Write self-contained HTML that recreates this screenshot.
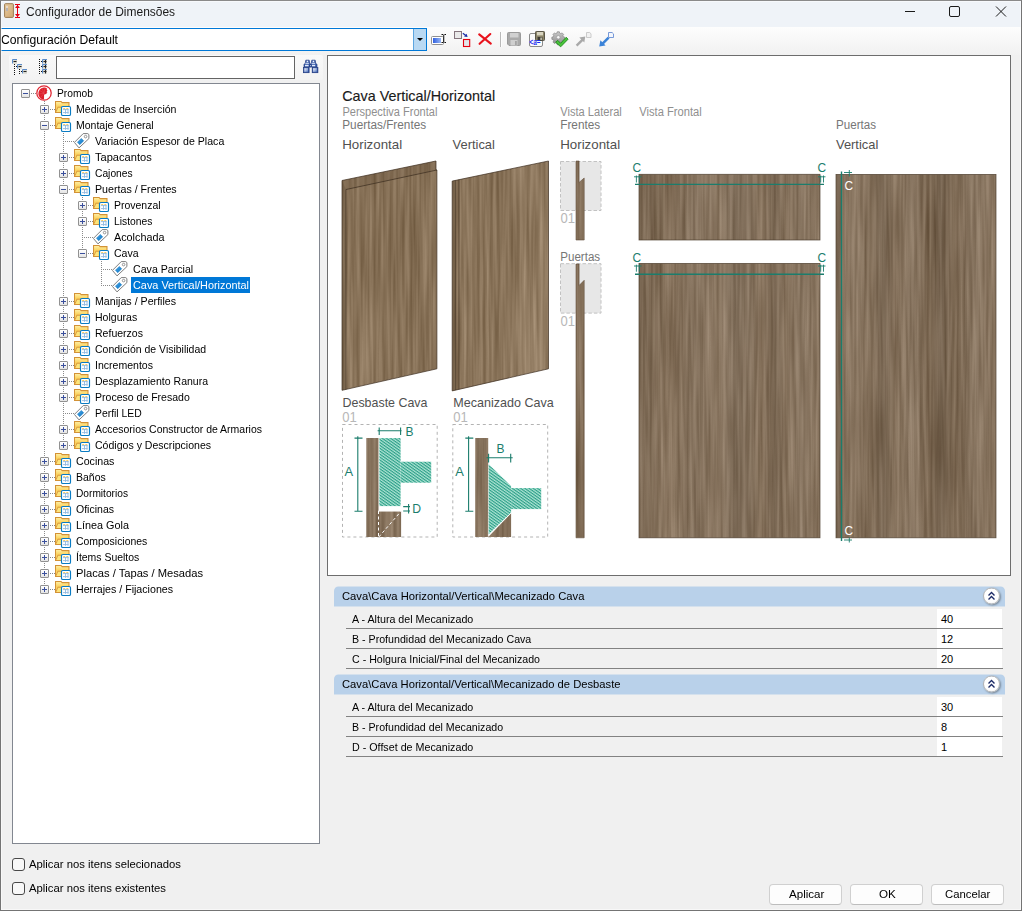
<!DOCTYPE html><html><head><meta charset="utf-8"><title>Configurador de Dimensões</title><style>
html,body{margin:0;padding:0;}
body{width:1022px;height:911px;overflow:hidden;background:#f0f0f0;font-family:"Liberation Sans",sans-serif;font-size:11px;color:#000;position:relative;}
.abs{position:absolute;}
.fx{display:inline-block;font-weight:normal;transform-origin:0 50%;white-space:nowrap;}
#win{z-index:10;pointer-events:none;position:absolute;left:0;top:0;width:1020px;height:909px;border:1px solid #747474;border-top-color:#8a8a8a;box-shadow:inset 0 0 0 1px rgba(255,255,255,.5);}
#title{position:absolute;left:1px;top:1px;width:1020px;height:26px;background:#eff3f8;}
#title .cap{position:absolute;left:25px;top:4px;font-size:12px;line-height:15px;color:#1b1b1b;white-space:nowrap;}
#tb{position:absolute;left:1px;top:27px;width:1020px;height:28px;background:linear-gradient(#fdfdfd,#f1f1f1);}
#combo{position:absolute;left:-1px;top:28px;width:426px;height:21px;border:1px solid #0078d7;background:#fff;}
#combo .txt{position:absolute;left:1.400px;top:4px;font-size:12px;line-height:15px;white-space:nowrap;}
#combo .btn{position:absolute;right:0;top:0;width:12px;height:21px;background:#b9d9f3;border-left:1px solid #5ea6e0;}
#combo .btn:after{content:"";position:absolute;left:3px;top:9px;border:3px solid transparent;border-top:3px solid #000;border-bottom:none;}
#tstrip{position:absolute;left:9px;top:55px;width:314px;height:25px;background:linear-gradient(#f9f9f9,#f3f3f3);border-radius:2px;}
#search{position:absolute;left:56px;top:56px;width:237px;height:21px;border:1px solid #646464;background:#fff;}
#tree{position:absolute;left:12px;top:83px;width:306px;height:759px;border:1px solid #828790;background:#fff;overflow:hidden;}
.row{position:absolute;height:16px;line-height:16px;white-space:nowrap;font-size:11px;}
.row.sel{color:#fff;}
.exp{position:absolute;width:7px;height:7px;border:1px solid #919191;background:linear-gradient(#fff,#e4e4e4);border-radius:1px;}
.exp i{position:absolute;left:1px;top:3px;width:5px;height:1px;background:#3a4f9c;}
.exp b{position:absolute;left:3px;top:1px;width:1px;height:5px;background:#3a4f9c;}
.vd{position:absolute;width:1px;background-image:linear-gradient(#8a8a8a 50%,transparent 50%);background-size:1px 2px;}
.hd{position:absolute;height:1px;background-image:linear-gradient(90deg,#8a8a8a 50%,transparent 50%);background-size:2px 1px;}
.cb{position:absolute;left:12px;width:11px;height:11px;border:1px solid #484848;border-radius:3px;background:#f8f8f8;}
.cbl{position:absolute;left:29px;font-size:11px;line-height:14px;white-space:nowrap;}
.btn3{position:absolute;top:884px;width:71px;height:19px;border:1px solid #d0d0d0;border-bottom-color:#bdbdbd;border-radius:4px;background:#fdfdfd;text-align:center;line-height:19px;font-size:11px;}
#imgp{position:absolute;left:327px;top:55px;width:682px;height:519px;border:1px solid #6d6d6d;background:#fff;overflow:hidden;}
.hdr{position:absolute;left:334px;width:671px;height:20px;background:#b9d1ea;border-radius:4.500px 4.500px 0 0;transform:translateY(0.500px);}
.hdr span{position:absolute;left:8px;top:1.700px;line-height:14px;font-size:11px;white-space:nowrap;}
.chev{position:absolute;left:649px;top:0.500px;width:15px;height:15px;border:1px solid #b5b5b5;border-radius:50%;background:radial-gradient(circle at 50% 40%,#fff 60%,#e8e8e8);box-shadow:1px 1px 2px rgba(0,0,0,.35);}
.prow{position:absolute;left:346px;width:657px;height:19px;border-bottom:1px solid #828282;}
.prow span{position:absolute;left:6px;top:3px;line-height:14px;white-space:nowrap;}
.prow em{font-style:normal;position:absolute;left:591px;top:0;width:65px;height:19px;background:#fff;}
.prow em u{text-decoration:none;position:absolute;left:4px;top:3px;line-height:14px;}
</style></head><body>
<div id="win"></div>
<div id="title"><div class="cap"><b class="fx" style="transform:scaleX(0.9978)">Configurador de Dimensões</b></div>
<svg class="abs" style="left:880px;top:0" width="140" height="26" viewBox="0 0 140 26" fill="none" stroke="#1a1a1a" stroke-width="1"><path d="M24 10.5h10"/><rect x="68.5" y="5.5" width="10" height="10" rx="1.5"/><path d="M115 5.5l10 10M125 5.5l-10 10"/></svg>
</div>
<div id="tb"></div>
<div id="combo"><div class="txt"><b class="fx" style="transform:scaleX(1.0138)">Configuración Default</b></div><div class="btn"></div></div>
<svg class="abs" style="left:0;top:0" width="30" height="26" viewBox="0 0 30 26">
<defs><linearGradient id="gdoor" x1="0" y1="0" x2="1" y2="1"><stop offset="0" stop-color="#e9cda2"/><stop offset="1" stop-color="#cfa671"/></linearGradient></defs>
<rect x="4.6" y="3.7" width="8.8" height="13.7" rx="0.8" fill="url(#gdoor)" stroke="#9c7b52" stroke-width="1"/>
<rect x="6.4" y="6" width="1.2" height="5" fill="#e8e8ee"/><rect x="6.4" y="8" width="1.2" height="3" fill="#9a9aa6"/>
<path d="M15 4.5h5M15 17.5h5M17.5 5v12" stroke="#e60012" stroke-width="1" fill="none"/>
<path d="M17.5 5l2.5 3h-5zM17.5 17l2.5-3h-5z" fill="#e60012"/>
</svg>
<svg class="abs" style="left:424px;top:26px" width="200" height="28" viewBox="0 0 200 28">
<defs>
<linearGradient id="gblue" x1="0" y1="0" x2="1" y2="0"><stop offset="0" stop-color="#2f5fe0"/><stop offset="1" stop-color="#9ab8f4"/></linearGradient>
<linearGradient id="ggear" x1="0" y1="0" x2="0" y2="1"><stop offset="0" stop-color="#c9c9c9"/><stop offset="1" stop-color="#8d8d8d"/></linearGradient>
</defs>
<!-- rename -->
<rect x="7.5" y="10.5" width="12" height="8" rx="1" fill="#fff" stroke="#8f8f8f"/>
<rect x="9" y="12" width="8" height="5" fill="url(#gblue)"/>
<path d="M17.5 8.5h1.5M20.5 8.5h1.5M17.5 16.5h1.5M20.5 16.5h1.5M19.75 8.5v8" stroke="#111" stroke-width="1" fill="none"/>
<!-- move -->
<rect x="30.5" y="5.5" width="7" height="7" fill="#e9e9e9" stroke="#85757d"/>
<path d="M38.8 7.200l3.400 2.600" stroke="#1c2fa8" stroke-width="1.200" fill="none"/><path d="M43.600 10.900l-3.600-.300 2.600-2.800z" fill="#1c2fa8"/>
<rect x="39.5" y="13.5" width="6.2" height="7" fill="#e3e6ea" stroke="#e3000f" stroke-width="1.1"/>
<!-- delete X -->
<path d="M55.200 8.400l11.600 9.200M66.300 8L55.600 17.800" stroke="#e8121c" stroke-width="2.1" stroke-linecap="round" fill="none"/>
<!-- separator -->
<path d="M76.5 6v15" stroke="#b9b9b9" stroke-width="1"/><path d="M77.5 6v15" stroke="#fdfdfd" stroke-width="1"/>
<!-- save disabled -->
<path d="M83.5 7.5a1 1 0 0 1 1-1h11a1 1 0 0 1 1 1v11a1 1 0 0 1-1 1h-10.5l-1.5-1.5z" fill="#a9a9a9" stroke="#9a9a9a"/>
<rect x="86" y="7" width="8.5" height="4.5" fill="#d0d0d0"/><rect x="86.5" y="14" width="7" height="5.5" fill="#cfcfcf"/><rect x="91" y="15" width="1.8" height="4" fill="#a4a4a4"/>
<!-- save-as -->
<rect x="105.5" y="7.5" width="13" height="13" rx="1.5" fill="#fafafa" stroke="#8a8a8a"/>
<rect x="111.5" y="5.5" width="9" height="9" rx="0.8" fill="#8b8468" stroke="#5a5648"/>
<rect x="113" y="6" width="6" height="3.4" fill="#d8d4c0"/><rect x="113.6" y="11" width="4.8" height="3.5" fill="#3c3a34"/><rect x="116.4" y="11.5" width="1.4" height="2.5" fill="#d8d4c0"/>
<text x="105.6" y="19.3" font-family="Liberation Sans,sans-serif" font-size="9" font-weight="bold" fill="#1a2df0" textLength="11" lengthAdjust="spacingAndGlyphs">&lt;a=</text>
<!-- gear + check -->
<g transform="translate(134.300,11.300) scale(0.880)">
<path d="M-1.2-6.3h2.4l.4 1.6 1.3.55 1.45-.85 1.7 1.7-.85 1.45.55 1.3 1.6.4v2.4l-1.6.4-.55 1.3.85 1.45-1.7 1.7-1.45-.85-1.3.55-.4 1.6h-2.4l-.4-1.6-1.3-.55-1.45.85-1.7-1.7.85-1.45-.55-1.3-1.6-.4v-2.4l1.6-.4.55-1.3-.85-1.45 1.7-1.7 1.45.85 1.3-.55z" fill="url(#ggear)" stroke="#7d7d7d" stroke-width="0.7"/>
<circle r="2" fill="#f6f6f6" stroke="#8a8a8a" stroke-width="0.6"/></g>
<path d="M131.6 16.2l2.2-1.8 2.8 2.9 5.6-6 1.9 1.9-7.4 7.6z" fill="#49c43a" stroke="#1f8a1c" stroke-width="0.9" stroke-linejoin="round"/>
<!-- arrow up-right disabled -->
<path d="M152.6 19.6l6.3-6.3" stroke="#a9a9a9" stroke-width="2.4"/><path d="M161.3 10.6l-1 6-5-5z" fill="#a9a9a9"/>
<path d="M162.5 6.5h3.2l1.3 1.3v3.7h-4.5z" fill="#f2f2f2" stroke="#c6c6c6" stroke-width="0.9"/>
<!-- arrow down-left blue -->
<path d="M184.6 11.6l-6 6" stroke="#3b83d8" stroke-width="2.6"/><path d="M175.2 20.6l1.2-6.4 5.2 5.2z" fill="#3b83d8"/>
<path d="M184.5 6.5h3.6l1.4 1.4v3.6h-5z" fill="#f4f7fd" stroke="#6a8fd4" stroke-width="0.9"/>
</svg>

<div id="tstrip"></div><div id="search"></div>
<svg class="abs" style="left:9px;top:55px" width="316" height="25" viewBox="0 0 316 25">
<!-- collapse-all icon (origin 9,55) -->
<g fill="none">
<path d="M5.500 9v12M10.500 14v6" stroke="#111" stroke-dasharray="1 1"/>
<path d="M7 11.500h1M12 16.500h1" stroke="#111"/>
<g stroke="#5b8bc8" stroke-width="1"><path d="M3.500 8.500v-4h4.500M8.500 13.500v-4h4.500M13.500 18.500v-4h4.500"/></g>
<g fill="#d6d6ce" stroke="none"><rect x="4" y="5" width="4" height="3.700"/><rect x="9" y="10" width="4" height="3.700"/><rect x="14" y="15" width="4" height="3.700"/></g>
<path d="M4.500 6.500h3M9.500 11.500h3M14.500 16.500h3" stroke="#222" stroke-width="1"/>
</g>
<!-- expand-all icon -->
<g fill="none">
<path d="M30.500 4v16" stroke="#111" stroke-dasharray="1 1"/>
<path d="M32 6.500h1M32 11.500h1M32 16.500h1" stroke="#111"/>
<g stroke="#5b8bc8" stroke-width="1"><path d="M33.500 8.500v-4h4.500M33.500 13.500v-4h4.500M33.500 18.500v-4h4.500"/></g>
<g fill="#d6d6ce" stroke="none"><rect x="34" y="5" width="4" height="3.700"/><rect x="34" y="10" width="4" height="3.700"/><rect x="34" y="15" width="4" height="3.700"/></g>
<path d="M34.500 6.500h3M36.500 5v3.500M34.500 11.500h3M36.500 10v3.500M34.500 16.500h3M36.500 15v3.500" stroke="#222" stroke-width="1"/>
</g>
<!-- binoculars -->
<g transform="translate(294,4)">
<defs><linearGradient id="gbin" x1="0" y1="0" x2="1" y2="1"><stop offset="0" stop-color="#ffffff"/><stop offset="1" stop-color="#4f74c0"/></linearGradient></defs>
<path d="M2.800 1.200h3.400l.6 3.600 1 .4v2.800h-6.800v-2.800l1.200-.4z" fill="#3a5ca8" stroke="#1f3a82" stroke-width="0.700"/>
<path d="M8.800 1.200h3.400l.6 3.600 1.200.4v2.800h-6.800v-2.800l1-.4z" fill="#3a5ca8" stroke="#1f3a82" stroke-width="0.700"/>
<rect x="3.700" y="1.700" width="1.500" height="1.500" fill="#eef3ff"/><rect x="9.700" y="1.700" width="1.500" height="1.500" fill="#eef3ff"/>
<rect x="2.400" y="3.800" width="3.500" height="1" fill="#dfe8fb"/><rect x="8.600" y="3.800" width="3.500" height="1" fill="#dfe8fb"/>
<rect x="2" y="5.800" width="3.600" height="1.500" fill="#e6edfc"/><rect x="8.600" y="5.800" width="3.600" height="1.500" fill="#e6edfc"/>
<rect x="6.300" y="5.500" width="2.400" height="2.400" fill="#1f3a82"/><rect x="7" y="6.200" width="1" height="1" fill="#b9c8ea"/>
<rect x="0.400" y="8.400" width="5.700" height="5.300" fill="#2f4f9e" stroke="#1f3a82" stroke-width="0.700"/>
<rect x="9.200" y="8.400" width="5.700" height="5.300" fill="#2f4f9e" stroke="#1f3a82" stroke-width="0.700"/>
<rect x="1.300" y="9.200" width="3.800" height="3.700" fill="url(#gbin)"/><rect x="10.100" y="9.200" width="3.800" height="3.700" fill="url(#gbin)"/>
</g>
</svg>

<div id="tree">
<svg width="0" height="0" style="position:absolute"><defs><linearGradient id="gfold" x1="0" y1="0" x2="0" y2="1"><stop offset="0" stop-color="#fff0a8"/><stop offset="0.45" stop-color="#fbd35e"/><stop offset="1" stop-color="#fde680"/></linearGradient>
<linearGradient id="gtag" x1="0" y1="0" x2="1" y2="1"><stop offset="0" stop-color="#49a6e6"/><stop offset="1" stop-color="#0a74c4"/></linearGradient>
<g id="i-folder">
<path d="M0.5 0.500h5.600l1 1.100h6.900v9.800h-13.500z" fill="url(#gfold)" stroke="#d39236" stroke-width="1.050"/>
<path d="M1.200 10.600l1.600-4.400h11" fill="none" stroke="#da9a40" stroke-width="1"/>
<path d="M3.200 6.900h10.300v3.900h-11.500z" fill="#fde47a" opacity=".9"/>
<rect x="6.5" y="5.5" width="9" height="9" rx="1.3" fill="#fff" stroke="#0a7bc2" stroke-width="1.15"/>
<path d="M8.2 7.6h2M11.3 7.6h2" stroke="#f7c23c" stroke-width="0.9"/>
<path d="M8 8.6h5.6M8 11.6h5.6M10.5 8v4.8M13 8v4.8" stroke="#8eb8e0" stroke-width="0.9" fill="none"/>
</g>
<g id="i-tag">
<path d="M0.4 9.4L9.2 0.6h4.6l1.1 1v4L5 14.9z" fill="#fff" stroke="#7d7d7d" stroke-width="1" stroke-linejoin="round"/>
<circle cx="11.6" cy="3.6" r="1.3" fill="#fff" stroke="#8a8a8a" stroke-width="0.9"/>
<path d="M3.400 9.300l3.900-3.900 2.400 2.400-3.900 3.900z" fill="url(#gtag)" stroke="#0b73be" stroke-width="0.5"/>
</g>
<g id="i-promob">
<circle cx="8" cy="8" r="7.2" fill="#fff" stroke="#e02a36" stroke-width="1.3"/>
<path d="M8 14.6A5.7 5.7 0 0 1 2.4 8A5.7 5.7 0 0 1 8 2.6c1.2 0 2.4.4 3.2 1.1l-.6.9.9.8-.9.9.8 1-1 .6.2 1.1-1.6.3-.9.5z" fill="#dc1f2b"/>
<path d="M8 8.4L3.2 5M8 8.4L2.6 9M8 8.4L4.6 12.6M8 8.4L6 3M8 8.4L9 3" stroke="#ee6a72" stroke-width="0.35"/>
</g>
</defs></svg>
<div class="vd" style="left:31px;top:17px;height:489px"></div>
<div class="vd" style="left:50px;top:49px;height:313px"></div>
<div class="vd" style="left:69px;top:113px;height:57px"></div>
<div class="vd" style="left:88px;top:177px;height:25px"></div>
<div class="hd" style="left:18px;top:9px;width:5px"></div>
<div class="exp" style="left:8px;top:5px"><i></i></div>
<svg class="abs" style="left:23px;top:1px" width="17" height="16"><use href="#i-promob"/></svg>
<div class="row" style="left:44.2px;top:1px"><b class="fx" style="transform:scaleX(0.9317)">Promob</b></div>
<div class="hd" style="left:37px;top:25px;width:5px"></div>
<div class="exp" style="left:27px;top:21px"><i></i><b></b></div>
<svg class="abs" style="left:42px;top:17px" width="17" height="16"><use href="#i-folder"/></svg>
<div class="row" style="left:63.2px;top:17px"><b class="fx" style="transform:scaleX(0.9611)">Medidas de Inserción</b></div>
<div class="hd" style="left:37px;top:41px;width:5px"></div>
<div class="exp" style="left:27px;top:37px"><i></i></div>
<svg class="abs" style="left:42px;top:33px" width="17" height="16"><use href="#i-folder"/></svg>
<div class="row" style="left:63.2px;top:33px"><b class="fx" style="transform:scaleX(0.9554)">Montaje General</b></div>
<div class="hd" style="left:52px;top:57px;width:9px"></div>
<svg class="abs" style="left:61px;top:49px" width="17" height="16"><use href="#i-tag"/></svg>
<div class="row" style="left:82.2px;top:49px"><b class="fx" style="transform:scaleX(0.9626)">Variación Espesor de Placa</b></div>
<div class="hd" style="left:56px;top:73px;width:5px"></div>
<div class="exp" style="left:46px;top:69px"><i></i><b></b></div>
<svg class="abs" style="left:61px;top:65px" width="17" height="16"><use href="#i-folder"/></svg>
<div class="row" style="left:82.2px;top:65px"><b class="fx" style="transform:scaleX(1.0077)">Tapacantos</b></div>
<div class="hd" style="left:56px;top:89px;width:5px"></div>
<div class="exp" style="left:46px;top:85px"><i></i><b></b></div>
<svg class="abs" style="left:61px;top:81px" width="17" height="16"><use href="#i-folder"/></svg>
<div class="row" style="left:82.2px;top:81px"><b class="fx" style="transform:scaleX(0.9316)">Cajones</b></div>
<div class="hd" style="left:56px;top:105px;width:5px"></div>
<div class="exp" style="left:46px;top:101px"><i></i></div>
<svg class="abs" style="left:61px;top:97px" width="17" height="16"><use href="#i-folder"/></svg>
<div class="row" style="left:82.2px;top:97px"><b class="fx" style="transform:scaleX(0.9683)">Puertas / Frentes</b></div>
<div class="hd" style="left:75px;top:121px;width:5px"></div>
<div class="exp" style="left:65px;top:117px"><i></i><b></b></div>
<svg class="abs" style="left:80px;top:113px" width="17" height="16"><use href="#i-folder"/></svg>
<div class="row" style="left:101.2px;top:113px"><b class="fx" style="transform:scaleX(0.9525)">Provenzal</b></div>
<div class="hd" style="left:75px;top:137px;width:5px"></div>
<div class="exp" style="left:65px;top:133px"><i></i><b></b></div>
<svg class="abs" style="left:80px;top:129px" width="17" height="16"><use href="#i-folder"/></svg>
<div class="row" style="left:101.2px;top:129px"><b class="fx" style="transform:scaleX(0.9369)">Listones</b></div>
<div class="hd" style="left:71px;top:153px;width:9px"></div>
<svg class="abs" style="left:80px;top:145px" width="17" height="16"><use href="#i-tag"/></svg>
<div class="row" style="left:101.2px;top:145px"><b class="fx" style="transform:scaleX(0.9810)">Acolchada</b></div>
<div class="hd" style="left:75px;top:169px;width:5px"></div>
<div class="exp" style="left:65px;top:165px"><i></i></div>
<svg class="abs" style="left:80px;top:161px" width="17" height="16"><use href="#i-folder"/></svg>
<div class="row" style="left:101.2px;top:161px"><b class="fx" style="transform:scaleX(0.9577)">Cava</b></div>
<div class="hd" style="left:90px;top:185px;width:9px"></div>
<svg class="abs" style="left:99px;top:177px" width="17" height="16"><use href="#i-tag"/></svg>
<div class="row" style="left:120.19999999999999px;top:177px"><b class="fx" style="transform:scaleX(0.9654)">Cava Parcial</b></div>
<div class="hd" style="left:90px;top:201px;width:9px"></div>
<svg class="abs" style="left:99px;top:193px" width="17" height="16"><use href="#i-tag"/></svg>
<div class="abs" style="left:118px;top:193px;width:119px;height:16px;background:#0078d7"></div>
<div class="row sel" style="left:120.19999999999999px;top:193px"><b class="fx" style="transform:scaleX(0.9882)">Cava Vertical/Horizontal</b></div>
<div class="hd" style="left:56px;top:217px;width:5px"></div>
<div class="exp" style="left:46px;top:213px"><i></i><b></b></div>
<svg class="abs" style="left:61px;top:209px" width="17" height="16"><use href="#i-folder"/></svg>
<div class="row" style="left:82.2px;top:209px"><b class="fx" style="transform:scaleX(0.9682)">Manijas / Perfiles</b></div>
<div class="hd" style="left:56px;top:233px;width:5px"></div>
<div class="exp" style="left:46px;top:229px"><i></i><b></b></div>
<svg class="abs" style="left:61px;top:225px" width="17" height="16"><use href="#i-folder"/></svg>
<div class="row" style="left:82.2px;top:225px"><b class="fx" style="transform:scaleX(0.9584)">Holguras</b></div>
<div class="hd" style="left:56px;top:249px;width:5px"></div>
<div class="exp" style="left:46px;top:245px"><i></i><b></b></div>
<svg class="abs" style="left:61px;top:241px" width="17" height="16"><use href="#i-folder"/></svg>
<div class="row" style="left:82.2px;top:241px"><b class="fx" style="transform:scaleX(0.9573)">Refuerzos</b></div>
<div class="hd" style="left:56px;top:265px;width:5px"></div>
<div class="exp" style="left:46px;top:261px"><i></i><b></b></div>
<svg class="abs" style="left:61px;top:257px" width="17" height="16"><use href="#i-folder"/></svg>
<div class="row" style="left:82.2px;top:257px"><b class="fx" style="transform:scaleX(0.9528)">Condición de Visibilidad</b></div>
<div class="hd" style="left:56px;top:281px;width:5px"></div>
<div class="exp" style="left:46px;top:277px"><i></i><b></b></div>
<svg class="abs" style="left:61px;top:273px" width="17" height="16"><use href="#i-folder"/></svg>
<div class="row" style="left:82.2px;top:273px"><b class="fx" style="transform:scaleX(0.9582)">Incrementos</b></div>
<div class="hd" style="left:56px;top:297px;width:5px"></div>
<div class="exp" style="left:46px;top:293px"><i></i><b></b></div>
<svg class="abs" style="left:61px;top:289px" width="17" height="16"><use href="#i-folder"/></svg>
<div class="row" style="left:82.2px;top:289px"><b class="fx" style="transform:scaleX(0.9583)">Desplazamiento Ranura</b></div>
<div class="hd" style="left:56px;top:313px;width:5px"></div>
<div class="exp" style="left:46px;top:309px"><i></i><b></b></div>
<svg class="abs" style="left:61px;top:305px" width="17" height="16"><use href="#i-folder"/></svg>
<div class="row" style="left:82.2px;top:305px"><b class="fx" style="transform:scaleX(0.9570)">Proceso de Fresado</b></div>
<div class="hd" style="left:52px;top:329px;width:9px"></div>
<svg class="abs" style="left:61px;top:321px" width="17" height="16"><use href="#i-tag"/></svg>
<div class="row" style="left:82.2px;top:321px"><b class="fx" style="transform:scaleX(0.9428)">Perfil LED</b></div>
<div class="hd" style="left:56px;top:345px;width:5px"></div>
<div class="exp" style="left:46px;top:341px"><i></i><b></b></div>
<svg class="abs" style="left:61px;top:337px" width="17" height="16"><use href="#i-folder"/></svg>
<div class="row" style="left:82.2px;top:337px"><b class="fx" style="transform:scaleX(0.9518)">Accesorios Constructor de Armarios</b></div>
<div class="hd" style="left:56px;top:361px;width:5px"></div>
<div class="exp" style="left:46px;top:357px"><i></i><b></b></div>
<svg class="abs" style="left:61px;top:353px" width="17" height="16"><use href="#i-folder"/></svg>
<div class="row" style="left:82.2px;top:353px"><b class="fx" style="transform:scaleX(0.9590)">Códigos y Descripciones</b></div>
<div class="hd" style="left:37px;top:377px;width:5px"></div>
<div class="exp" style="left:27px;top:373px"><i></i><b></b></div>
<svg class="abs" style="left:42px;top:369px" width="17" height="16"><use href="#i-folder"/></svg>
<div class="row" style="left:63.2px;top:369px"><b class="fx" style="transform:scaleX(0.9660)">Cocinas</b></div>
<div class="hd" style="left:37px;top:393px;width:5px"></div>
<div class="exp" style="left:27px;top:389px"><i></i><b></b></div>
<svg class="abs" style="left:42px;top:385px" width="17" height="16"><use href="#i-folder"/></svg>
<div class="row" style="left:63.2px;top:385px"><b class="fx" style="transform:scaleX(0.9518)">Baños</b></div>
<div class="hd" style="left:37px;top:409px;width:5px"></div>
<div class="exp" style="left:27px;top:405px"><i></i><b></b></div>
<svg class="abs" style="left:42px;top:401px" width="17" height="16"><use href="#i-folder"/></svg>
<div class="row" style="left:63.2px;top:401px"><b class="fx" style="transform:scaleX(0.9247)">Dormitorios</b></div>
<div class="hd" style="left:37px;top:425px;width:5px"></div>
<div class="exp" style="left:27px;top:421px"><i></i><b></b></div>
<svg class="abs" style="left:42px;top:417px" width="17" height="16"><use href="#i-folder"/></svg>
<div class="row" style="left:63.2px;top:417px"><b class="fx" style="transform:scaleX(0.9560)">Oficinas</b></div>
<div class="hd" style="left:37px;top:441px;width:5px"></div>
<div class="exp" style="left:27px;top:437px"><i></i><b></b></div>
<svg class="abs" style="left:42px;top:433px" width="17" height="16"><use href="#i-folder"/></svg>
<div class="row" style="left:63.2px;top:433px"><b class="fx" style="transform:scaleX(0.9846)">Línea Gola</b></div>
<div class="hd" style="left:37px;top:457px;width:5px"></div>
<div class="exp" style="left:27px;top:453px"><i></i><b></b></div>
<svg class="abs" style="left:42px;top:449px" width="17" height="16"><use href="#i-folder"/></svg>
<div class="row" style="left:63.2px;top:449px"><b class="fx" style="transform:scaleX(0.9481)">Composiciones</b></div>
<div class="hd" style="left:37px;top:473px;width:5px"></div>
<div class="exp" style="left:27px;top:469px"><i></i><b></b></div>
<svg class="abs" style="left:42px;top:465px" width="17" height="16"><use href="#i-folder"/></svg>
<div class="row" style="left:63.2px;top:465px"><b class="fx" style="transform:scaleX(0.9499)">Ítems Sueltos</b></div>
<div class="hd" style="left:37px;top:489px;width:5px"></div>
<div class="exp" style="left:27px;top:485px"><i></i><b></b></div>
<svg class="abs" style="left:42px;top:481px" width="17" height="16"><use href="#i-folder"/></svg>
<div class="row" style="left:63.2px;top:481px"><b class="fx" style="transform:scaleX(1.0155)">Placas / Tapas / Mesadas</b></div>
<div class="hd" style="left:37px;top:505px;width:5px"></div>
<div class="exp" style="left:27px;top:501px"><i></i><b></b></div>
<svg class="abs" style="left:42px;top:497px" width="17" height="16"><use href="#i-folder"/></svg>
<div class="row" style="left:63.2px;top:497px"><b class="fx" style="transform:scaleX(0.9684)">Herrajes / Fijaciones</b></div>
</div>
<div class="cb" style="top:858px"></div><div class="cbl" style="top:857px"><b class="fx" style="transform:scaleX(1.0265)">Aplicar nos itens selecionados</b></div>
<div class="cb" style="top:882px"></div><div class="cbl" style="top:881px"><b class="fx" style="transform:scaleX(1.0278)">Aplicar nos itens existentes</b></div>
<div class="btn3" style="left:769px"><div class="abs" style="left:18.5px;top:0"><b class="fx" style="transform:scaleX(1.0528)">Aplicar</b></div></div>
<div class="btn3" style="left:850px"><div class="abs" style="left:27.5px;top:0"><b class="fx" style="transform:scaleX(1.0562)">OK</b></div></div>
<div class="btn3" style="left:931px"><div class="abs" style="left:12.5px;top:0"><b class="fx" style="transform:scaleX(1.0288)">Cancelar</b></div></div>
<div id="imgp"><svg class="abs" style="left:-328px;top:-56px" width="1022" height="911" viewBox="0 0 1022 911" font-family="Liberation Sans,sans-serif">
<defs>
<filter id="wood" x="0" y="0" width="100%" height="100%" color-interpolation-filters="sRGB">
<feTurbulence type="fractalNoise" baseFrequency="0.022 0.0016" numOctaves="2" seed="7"/>
<feColorMatrix type="matrix" values="1 0 0 0 0  1 0 0 0 0  1 0 0 0 0  0 0 0 0 1" result="a"/>
<feTurbulence type="fractalNoise" baseFrequency="0.30 0.010" numOctaves="2" seed="3"/>
<feColorMatrix type="matrix" values="1 0 0 0 0  1 0 0 0 0  1 0 0 0 0  0 0 0 0 1" result="b"/>
<feComposite in="a" in2="b" operator="arithmetic" k1="0" k2="0.35" k3="0.65" k4="0"/>
<feComponentTransfer><feFuncR type="table" tableValues="0.328 0.708"/><feFuncG type="table" tableValues="0.249 0.629"/><feFuncB type="table" tableValues="0.163 0.543"/></feComponentTransfer>
<feComposite in2="SourceGraphic" operator="in"/>
</filter>
<filter id="woodp" x="0" y="0" width="100%" height="100%" color-interpolation-filters="sRGB">
<feTurbulence type="fractalNoise" baseFrequency="0.022 0.0016" numOctaves="2" seed="11"/>
<feColorMatrix type="matrix" values="1 0 0 0 0  1 0 0 0 0  1 0 0 0 0  0 0 0 0 1" result="a"/>
<feTurbulence type="fractalNoise" baseFrequency="0.30 0.010" numOctaves="2" seed="5"/>
<feColorMatrix type="matrix" values="1 0 0 0 0  1 0 0 0 0  1 0 0 0 0  0 0 0 0 1" result="b"/>
<feComposite in="a" in2="b" operator="arithmetic" k1="0" k2="0.35" k3="0.65" k4="0"/>
<feComponentTransfer><feFuncR type="table" tableValues="0.355 0.735"/><feFuncG type="table" tableValues="0.269 0.649"/><feFuncB type="table" tableValues="0.167 0.547"/></feComponentTransfer>
<feComposite in2="SourceGraphic" operator="in"/>
</filter>
<pattern id="hatch" width="2.4" height="2.4" patternUnits="userSpaceOnUse" patternTransform="rotate(35)">
<rect width="2.4" height="2.4" fill="#aee3d4"/><rect width="2.4" height="1.150" fill="#2a9f87"/>
</pattern>
<linearGradient id="bandF" x1="0" y1="0" x2="1" y2="0">
<stop offset="0" stop-color="#000" stop-opacity=".05"/><stop offset=".18" stop-color="#000" stop-opacity="0"/><stop offset=".30" stop-color="#fff" stop-opacity=".06"/><stop offset=".44" stop-color="#fff" stop-opacity=".03"/>
<stop offset=".53" stop-color="#000" stop-opacity=".10"/><stop offset=".62" stop-color="#000" stop-opacity=".07"/><stop offset=".68" stop-color="#000" stop-opacity="0"/><stop offset=".75" stop-color="#000" stop-opacity=".07"/>
<stop offset=".81" stop-color="#fff" stop-opacity=".02"/><stop offset=".90" stop-color="#fff" stop-opacity=".06"/><stop offset="1" stop-color="#000" stop-opacity=".02"/>
</linearGradient>
<linearGradient id="bandV" x1="0" y1="0" x2="1" y2="0">
<stop offset="0" stop-color="#000" stop-opacity=".04"/><stop offset=".12" stop-color="#fff" stop-opacity=".04"/><stop offset=".22" stop-color="#000" stop-opacity=".03"/><stop offset=".30" stop-color="#000" stop-opacity=".09"/>
<stop offset=".37" stop-color="#000" stop-opacity=".02"/><stop offset=".48" stop-color="#fff" stop-opacity=".06"/><stop offset=".58" stop-color="#000" stop-opacity=".02"/><stop offset=".66" stop-color="#000" stop-opacity=".09"/>
<stop offset=".74" stop-color="#000" stop-opacity=".02"/><stop offset=".86" stop-color="#fff" stop-opacity=".06"/><stop offset="1" stop-color="#fff" stop-opacity=".02"/>
</linearGradient>
</defs>
<g fill="#1a1a1a">
<text x="342.2" y="101.3" font-size="15" textLength="153" lengthAdjust="spacingAndGlyphs" stroke="#1a1a1a" stroke-width="0.150">Cava Vertical/Horizontal</text>
</g>
<g fill="#8f8f8f" font-size="12">
<text x="342.4" y="115.7" textLength="95" lengthAdjust="spacingAndGlyphs">Perspectiva Frontal</text>
<text x="560.3" y="115.7" textLength="61.5" lengthAdjust="spacingAndGlyphs">Vista Lateral</text>
<text x="639.3" y="115.7" textLength="62.5" lengthAdjust="spacingAndGlyphs">Vista Frontal</text>
</g>
<g fill="#767676" font-size="12.5">
<text x="342.2" y="128.5" textLength="84" lengthAdjust="spacingAndGlyphs">Puertas/Frentes</text>
<text x="560.2" y="128.5" textLength="40" lengthAdjust="spacingAndGlyphs">Frentes</text>
<text x="836" y="128.5" textLength="40" lengthAdjust="spacingAndGlyphs">Puertas</text>
<text x="560.2" y="260.8" textLength="40" lengthAdjust="spacingAndGlyphs">Puertas</text>
</g>
<g fill="#505050" font-size="13.5">
<text x="342.2" y="148.8" textLength="60" lengthAdjust="spacingAndGlyphs">Horizontal</text>
<text x="452.6" y="148.8" textLength="42.3" lengthAdjust="spacingAndGlyphs">Vertical</text>
<text x="560.2" y="148.8" textLength="60" lengthAdjust="spacingAndGlyphs">Horizontal</text>
<text x="836" y="148.8" textLength="42.3" lengthAdjust="spacingAndGlyphs">Vertical</text>
<text x="342.5" y="406.5" textLength="85" lengthAdjust="spacingAndGlyphs">Desbaste Cava</text>
<text x="453.3" y="406.5" textLength="100.5" lengthAdjust="spacingAndGlyphs">Mecanizado Cava</text>
</g>
<g fill="#b8b8b8" font-size="14">
<text x="342.300" y="421.900" textLength="14.500" lengthAdjust="spacingAndGlyphs">01</text>
<text x="453.200" y="421.900" textLength="14.500" lengthAdjust="spacingAndGlyphs">01</text>
<text x="560.600" y="223" textLength="14.500" lengthAdjust="spacingAndGlyphs">01</text>
<text x="560.600" y="325.700" textLength="14.500" lengthAdjust="spacingAndGlyphs">01</text>
</g>

<!-- perspective door 1 (horizontal) -->
<g filter="url(#woodp)"><path d="M342 180.500L436 161v9l0.900 0V368.800L342 390.300z" fill="#000"/></g>
<path d="M342 180.500L436 161v9L346 189.500z" fill="#5a4530" opacity=".16"/>
<path d="M342 180.500v209.800l4-0.900V189.500z" fill="#3e2e1e" opacity=".28"/>
<path d="M346 189.500L436.900 170" stroke="#3f3022" stroke-width="0.900" opacity=".85" fill="none"/>
<path d="M346 189.500v200" stroke="#3f3022" stroke-width="0.800" opacity=".7" fill="none"/>
<path d="M342 180.500L436 161v9h0.900V368.800L342 390.300z" fill="none" stroke="#3f3022" stroke-width="0.900" opacity=".8"/>
<!-- perspective door 2 (vertical) -->
<g filter="url(#woodp)"><path d="M452.200 181.100L548.500 161V368.800L452.200 390.900z" fill="#000"/></g>
<path d="M452.200 181.100v209.800l3.500-.8V180.400z" fill="#3e2e1e" opacity=".28"/>
<path d="M455.700 180.400v209.700l3.300-.8V179.700z" fill="#5a4530" opacity=".14"/>
<path d="M455.700 180.400v209.700M459 179.700v209.600" stroke="#3f3022" stroke-width="0.800" opacity=".75"/>
<path d="M452.200 181.100L548.500 161V368.800L452.200 390.900z" fill="none" stroke="#3f3022" stroke-width="0.900" opacity=".8"/>

<!-- side views -->
<rect x="560.500" y="161.500" width="40.500" height="49" fill="#e7e7e7" stroke="#c2c2c2" stroke-width="1" stroke-dasharray="3.500 2"/>
<rect x="560.500" y="263.700" width="40.500" height="49.400" fill="#e7e7e7" stroke="#c2c2c2" stroke-width="1" stroke-dasharray="3.500 2"/>
<g filter="url(#wood)"><path d="M576 161h3.100v21.400l5.100-4.400V240h-8.200z" fill="#000"/><path d="M576 264h3.100v21.400l5.100-5.100V537.800h-8.200z" fill="#000"/></g>
<path d="M576 161h3.100v21.400l5.100-4.400V240h-8.200z" fill="none" stroke="#5a4632" stroke-width="0.700" opacity=".8"/>
<path d="M576 264h3.100v21.400l5.100-5.100V537.800h-8.200z" fill="none" stroke="#5a4632" stroke-width="0.700" opacity=".8"/>

<!-- front views -->
<g filter="url(#wood)"><rect x="639" y="174.300" width="181" height="65.700" fill="#000"/><rect x="639" y="263.400" width="181" height="274.400" fill="#000"/><rect x="836" y="174.400" width="160" height="363.400" fill="#000"/></g>
<rect x="639" y="174.300" width="181" height="65.700" fill="url(#bandF)"/><rect x="639" y="263.400" width="181" height="274.400" fill="url(#bandF)"/><rect x="836" y="174.400" width="160" height="363.400" fill="url(#bandV)"/>
<g fill="none" stroke="#4d3e2e" stroke-width="0.800" opacity=".85"><rect x="639" y="174.300" width="181" height="65.700"/><rect x="639" y="263.400" width="181" height="274.400"/><rect x="836" y="174.400" width="160" height="363.400"/></g>
<rect x="836.400" y="174.800" width="5" height="362.200" fill="#4a3a2a" opacity=".25"/>
<g stroke="#1b7d6c" stroke-width="1.400" fill="none">
<path d="M635 184.400h189M635 274.200h189"/>
<path d="M841.500 171.500V541"/>
</g>
<g stroke="#1b7d6c" stroke-width="0.900" fill="none">
<path d="M634 176.800h7.500M636.400 175.500v7M639.300 175.500v7M818 176.800h7.500M820.700 175.500v7M823.500 175.500v7"/>
<path d="M634 266h7.500M636.400 264.700v7M639.300 264.700v7M818 266h7.500M820.700 264.700v7M823.500 264.700v7"/>
<path d="M844 172.500h8M849.300 170v6.500M844 540h8M849.300 537.500v5"/>
</g>
<g fill="#1b7d6c" font-size="13">
<text x="632.600" y="172.300" textLength="8.600" lengthAdjust="spacingAndGlyphs">C</text>
<text x="817.600" y="172.300" textLength="8.600" lengthAdjust="spacingAndGlyphs">C</text>
<text x="632.600" y="262.100" textLength="8.600" lengthAdjust="spacingAndGlyphs">C</text>
<text x="817.600" y="262.100" textLength="8.600" lengthAdjust="spacingAndGlyphs">C</text>
</g>
<g fill="#fff" font-size="13">
<text x="844.600" y="189.600" textLength="8.600" lengthAdjust="spacingAndGlyphs">C</text>
<text x="844.600" y="534.500" textLength="8.600" lengthAdjust="spacingAndGlyphs">C</text>
</g>

<!-- Desbaste diagram -->
<rect x="342.500" y="424.500" width="94.700" height="112.500" fill="none" stroke="#aaa" stroke-width="0.900" stroke-dasharray="3 3"/>
<g filter="url(#wood)"><path d="M366.300 438.100h12.200V511h22.600v26H366.300z" fill="#000"/></g>
<rect x="379.400" y="438.100" width="21.200" height="68" fill="url(#hatch)"/>
<rect x="400.600" y="461.700" width="30.600" height="21" fill="url(#hatch)"/>
<path d="M378.500 511h22.600" stroke="#fff" stroke-width="1.100"/>
<path d="M378.500 511v26M378.800 537L401 511.300" stroke="#fff" stroke-width="1" stroke-dasharray="3 2.500" fill="none"/>
<g stroke="#1b7d6c" stroke-width="1.100" fill="none">
<path d="M357.800 436.200v75.400M354.500 438.100h8M354.500 511.200h8"/>
<path d="M377.600 430.800h24M379.200 427.500v7.500M400.600 427.500v7.500"/>
<path d="M403.200 506.600h6.800M403.200 511h6.800M408.600 504v9.500"/>
</g>
<g fill="#1b7d6c" font-size="13">
<text x="344.600" y="475.500" textLength="8.600" lengthAdjust="spacingAndGlyphs">A</text>
<text x="405.600" y="435.600" textLength="8" lengthAdjust="spacingAndGlyphs">B</text>
<text x="412.200" y="512.700" textLength="8.800" lengthAdjust="spacingAndGlyphs">D</text>
</g>

<!-- Mecanizado diagram -->
<rect x="452.800" y="424.500" width="94.900" height="112.500" fill="none" stroke="#aaa" stroke-width="0.900" stroke-dasharray="3 3"/>
<g filter="url(#wood)"><path d="M475.200 438.100h13V537h-13zM488.200 537l22.900-23.700V537z" fill="#000"/></g>
<path d="M488.700 464.300L511.100 486v26.700L488.700 534.500z" fill="url(#hatch)"/>
<rect x="511.100" y="488.100" width="30.100" height="21" fill="url(#hatch)"/>
<path d="M488.500 535L511 513" stroke="#fff" stroke-width="0.800"/>
<g stroke="#1b7d6c" stroke-width="1.100" fill="none">
<path d="M468.600 436.200v75.400M465.300 438.100h8M465.300 511.200h8"/>
<path d="M486.500 457.700h26.200M488.600 453.800v8.800M510.700 453.800v8.800"/>
</g>
<g fill="#1b7d6c" font-size="13">
<text x="455.200" y="475.500" textLength="8.600" lengthAdjust="spacingAndGlyphs">A</text>
<text x="496.500" y="453.200" textLength="8" lengthAdjust="spacingAndGlyphs">B</text>
</g>
</svg>
</div>
<div class="hdr" style="top:586px"><span><b class="fx" style="transform:scaleX(1.0222)">Cava\Cava Horizontal/Vertical\Mecanizado Cava</b></span><div class="chev"><svg width="15" height="15" viewBox="0 0 15 15" fill="none" stroke="#1c2a66" stroke-width="1.4"><path d="M4.5 7l3-3 3 3M4.5 11l3-3 3 3"/></svg></div></div>
<div class="prow" style="top:609px"><span><b class="fx" style="transform:scaleX(0.9723)">A - Altura del Mecanizado</b></span><em><u>40</u></em></div>
<div class="prow" style="top:629px"><span><b class="fx" style="transform:scaleX(0.9677)">B - Profundidad del Mecanizado Cava</b></span><em><u>12</u></em></div>
<div class="prow" style="top:649px"><span><b class="fx" style="transform:scaleX(0.9669)">C - Holgura Inicial/Final del Mecanizado</b></span><em><u>20</u></em></div>
<div class="hdr" style="top:674px"><span><b class="fx" style="transform:scaleX(1.0190)">Cava\Cava Horizontal/Vertical\Mecanizado de Desbaste</b></span><div class="chev"><svg width="15" height="15" viewBox="0 0 15 15" fill="none" stroke="#1c2a66" stroke-width="1.4"><path d="M4.5 7l3-3 3 3M4.5 11l3-3 3 3"/></svg></div></div>
<div class="prow" style="top:697px"><span><b class="fx" style="transform:scaleX(0.9723)">A - Altura del Mecanizado</b></span><em><u>30</u></em></div>
<div class="prow" style="top:717px"><span><b class="fx" style="transform:scaleX(0.9652)">B - Profundidad del Mecanizado</b></span><em><u>8</u></em></div>
<div class="prow" style="top:737px"><span><b class="fx" style="transform:scaleX(0.9741)">D - Offset de Mecanizado</b></span><em><u>1</u></em></div>
</body></html>
